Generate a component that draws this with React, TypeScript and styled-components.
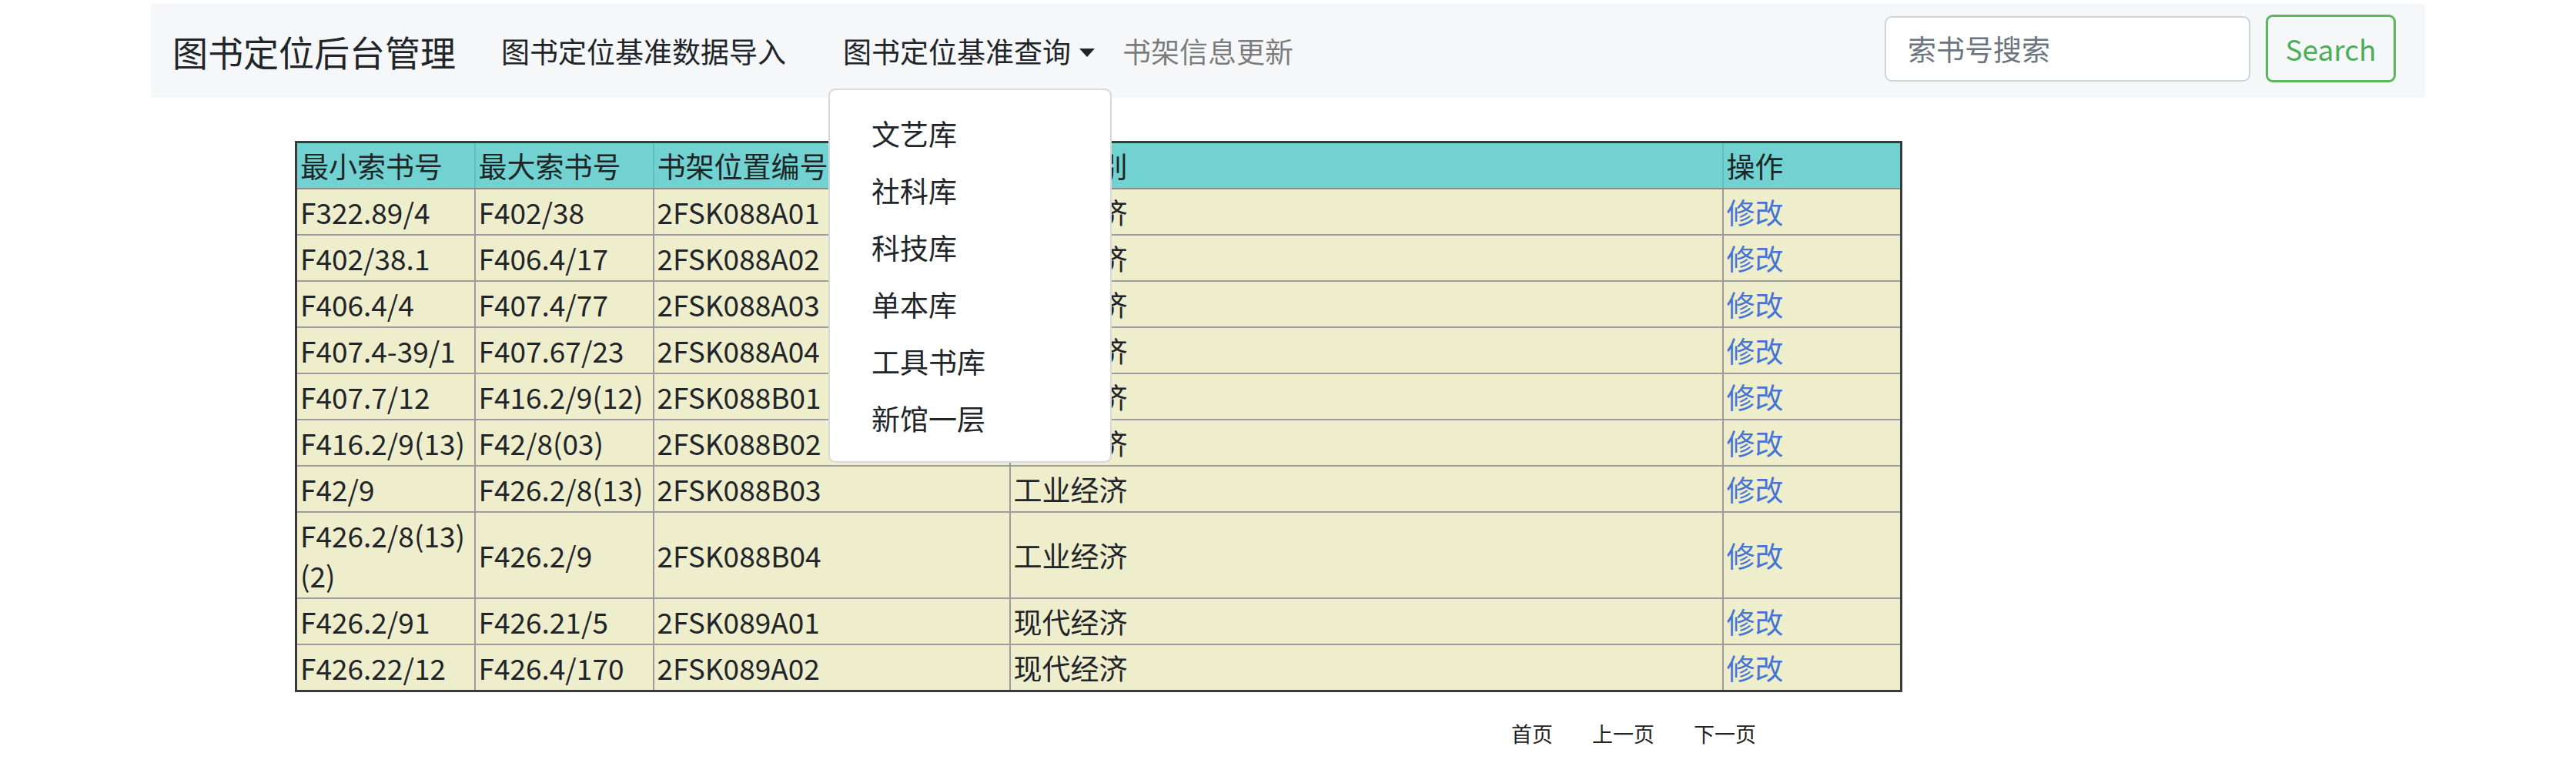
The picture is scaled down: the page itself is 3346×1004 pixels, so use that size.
import styled, { createGlobalStyle } from "styled-components";

const GlobalStyle = createGlobalStyle`
  html, body {
    margin: 0;
    padding: 0;
    background: #fff;
  }
  body {
    font-family: "Noto Sans CJK SC", "Noto Sans", sans-serif;
    color: #212529;
  }
`;

const Navbar = styled.nav`
  margin: 5px 196px 0;
  height: 122px;
  box-sizing: border-box;
  padding: 0 38px 0 28px;
  background: #f6f7f8;
  display: flex;
  align-items: center;
  justify-content: space-between;
`;

const LeftGroup = styled.div`
  display: flex;
  align-items: center;
`;

const Brand = styled.a`
  font-size: 46px;
  line-height: 1;
  color: #212529;
  margin-right: 41px;
  text-decoration: none;
`;

const NavList = styled.ul`
  display: flex;
  align-items: center;
  list-style: none;
  margin: 0;
  padding: 0;
`;

const NavItem = styled.li<{ $after?: number }>`
  position: relative;
  margin-right: ${(p) => p.$after ?? 0}px;
`;

const NavLink = styled.a<{ $muted?: boolean }>`
  display: block;
  padding: 18px;
  font-size: 37px;
  line-height: 56px;
  color: ${(p) => (p.$muted ? "rgba(0, 0, 0, 0.5)" : "#212529")};
  text-decoration: none;
  white-space: nowrap;
`;

const Toggle = styled(NavLink)`
  &::after {
    content: "";
    display: inline-block;
    margin-left: 11px;
    vertical-align: 8px;
    border-top: 11px solid #212529;
    border-left: 10px solid transparent;
    border-right: 10px solid transparent;
  }
`;

const Menu = styled.div`
  position: absolute;
  top: calc(100% + 3px);
  left: -1px;
  width: 368px;
  box-sizing: border-box;
  padding: 19px 0;
  background: #fff;
  border: 2px solid rgba(0, 0, 0, 0.15);
  border-radius: 9px;
  z-index: 10;
`;

const MenuItem = styled.a`
  display: block;
  padding: 9px 54px;
  font-size: 37px;
  line-height: 56px;
  color: #212529;
  text-decoration: none;
`;

const SearchForm = styled.form`
  display: flex;
  align-items: center;
  gap: 20px;
  margin: 0 0 6px;
`;

const SearchInput = styled.input`
  width: 475px;
  height: 85px;
  box-sizing: border-box;
  padding: 0 28px;
  font-family: inherit;
  font-size: 37px;
  color: #495057;
  background: #fff;
  border: 2px solid #ced4da;
  border-radius: 9px;
  outline: none;
  &::placeholder {
    color: #6c757d;
  }
`;

const SearchButton = styled.button`
  width: 169px;
  height: 88px;
  box-sizing: border-box;
  font-family: inherit;
  font-size: 37px;
  color: #4cae5a;
  background: transparent;
  border: 3px solid #5cb85c;
  border-radius: 9px;
`;

const Main = styled.main`
  padding: 56px 0 0 383px;
`;

const Table = styled.table`
  width: 2086px;
  table-layout: fixed;
  border-collapse: collapse;
  border: 3px solid #3a3a3a;
  background: #eeeecd;
  font-size: 37px;
  line-height: 52px;
`;

const HeadCell = styled.th`
  padding: 3px 4px;
  text-align: left;
  font-weight: 400;
  color: #1c2626;
  background: #72d1d1;
  border: 2px solid #5ec0bc;
  border-bottom-color: #8c8c8c;
`;

const Cell = styled.td`
  padding: 3px 4px;
  border: 2px solid #9c9c9c;
  color: #212529;
  vertical-align: middle;
`;

const EditLink = styled.a`
  color: #4574d4;
  text-decoration: none;
`;

const Pager = styled.div`
  display: flex;
  gap: 51px;
  margin: 35px 0 0 1580px;
  font-size: 27px;
  line-height: 38px;
`;

const PageLink = styled.a`
  color: #222;
  text-decoration: none;
`;

const libraries = ["文艺库", "社科库", "科技库", "单本库", "工具书库", "新馆一层"];

const columns = [
  { title: "最小索书号", width: 232 },
  { title: "最大索书号", width: 232 },
  { title: "书架位置编号", width: 463 },
  { title: "图书类别", width: 926 },
  { title: "操作", width: 232 },
];

const rows = [
  ["F322.89/4", "F402/38", "2FSK088A01", "工业经济"],
  ["F402/38.1", "F406.4/17", "2FSK088A02", "工业经济"],
  ["F406.4/4", "F407.4/77", "2FSK088A03", "工业经济"],
  ["F407.4-39/1", "F407.67/23", "2FSK088A04", "工业经济"],
  ["F407.7/12", "F416.2/9(12)", "2FSK088B01", "工业经济"],
  ["F416.2/9(13)", "F42/8(03)", "2FSK088B02", "工业经济"],
  ["F42/9", "F426.2/8(13)", "2FSK088B03", "工业经济"],
  ["F426.2/8(13)(2)", "F426.2/9", "2FSK088B04", "工业经济"],
  ["F426.2/91", "F426.21/5", "2FSK089A01", "现代经济"],
  ["F426.22/12", "F426.4/170", "2FSK089A02", "现代经济"],
];

export default function App() {
  return (
    <>
      <GlobalStyle />
      <Navbar>
        <LeftGroup>
          <Brand href="#">图书定位后台管理</Brand>
          <NavList>
            <NavItem $after={38}>
              <NavLink href="#">图书定位基准数据导入</NavLink>
            </NavItem>
            <NavItem>
              <Toggle href="#">图书定位基准查询</Toggle>
              <Menu>
                {libraries.map((name) => (
                  <MenuItem key={name} href="#">
                    {name}
                  </MenuItem>
                ))}
              </Menu>
            </NavItem>
            <NavItem>
              <NavLink href="#" $muted>
                书架信息更新
              </NavLink>
            </NavItem>
          </NavList>
        </LeftGroup>
        <SearchForm onSubmit={(e) => e.preventDefault()}>
          <SearchInput type="search" placeholder="索书号搜索" />
          <SearchButton type="submit">Search</SearchButton>
        </SearchForm>
      </Navbar>

      <Main>
        <Table>
          <colgroup>
            {columns.map((c) => (
              <col key={c.title} style={{ width: c.width }} />
            ))}
          </colgroup>
          <thead>
            <tr>
              {columns.map((c) => (
                <HeadCell key={c.title}>{c.title}</HeadCell>
              ))}
            </tr>
          </thead>
          <tbody>
            {rows.map((r) => (
              <tr key={r[0]}>
                {r.map((v, i) => (
                  <Cell key={i}>{v}</Cell>
                ))}
                <Cell>
                  <EditLink href="#">修改</EditLink>
                </Cell>
              </tr>
            ))}
          </tbody>
        </Table>
        <Pager>
          <PageLink href="#">首页</PageLink>
          <PageLink href="#">上一页</PageLink>
          <PageLink href="#">下一页</PageLink>
        </Pager>
      </Main>
    </>
  );
}
